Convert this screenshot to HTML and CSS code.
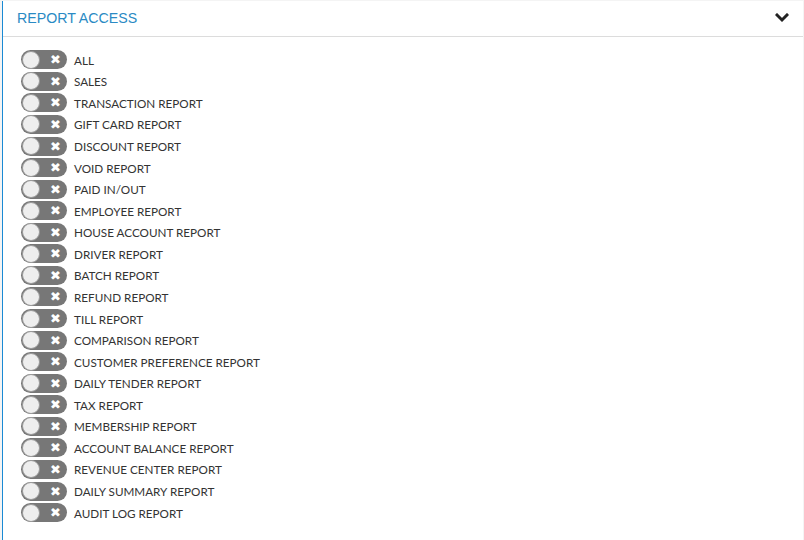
FILE: index.html
```html
<!DOCTYPE html>
<html lang="en">
<head>
  <meta charset="UTF-8" />
  <title>Report Access</title>
  <link rel="stylesheet" href="styles.css">
</head>
<body>
  <div class="panel">
    <div class="panel-head">
      <span class="panel-title">REPORT ACCESS</span>
      <svg class="chevron" width="14" height="10" viewBox="0 0 14 10">
        <path d="M2 2 L7 7 L12 2" fill="none" stroke="#222" stroke-width="3" stroke-linecap="square"/>
      </svg>
    </div>
    <div class="panel-body">
      <div class="row"><span class="toggle"><span class="knob"></span><span class="cross">&#10006;</span></span>ALL</div>
      <div class="row"><span class="toggle"><span class="knob"></span><span class="cross">&#10006;</span></span>SALES</div>
      <div class="row"><span class="toggle"><span class="knob"></span><span class="cross">&#10006;</span></span>TRANSACTION REPORT</div>
      <div class="row"><span class="toggle"><span class="knob"></span><span class="cross">&#10006;</span></span>GIFT CARD REPORT</div>
      <div class="row"><span class="toggle"><span class="knob"></span><span class="cross">&#10006;</span></span>DISCOUNT REPORT</div>
      <div class="row"><span class="toggle"><span class="knob"></span><span class="cross">&#10006;</span></span>VOID REPORT</div>
      <div class="row"><span class="toggle"><span class="knob"></span><span class="cross">&#10006;</span></span>PAID IN/OUT</div>
      <div class="row"><span class="toggle"><span class="knob"></span><span class="cross">&#10006;</span></span>EMPLOYEE REPORT</div>
      <div class="row"><span class="toggle"><span class="knob"></span><span class="cross">&#10006;</span></span>HOUSE ACCOUNT REPORT</div>
      <div class="row"><span class="toggle"><span class="knob"></span><span class="cross">&#10006;</span></span>DRIVER REPORT</div>
      <div class="row"><span class="toggle"><span class="knob"></span><span class="cross">&#10006;</span></span>BATCH REPORT</div>
      <div class="row"><span class="toggle"><span class="knob"></span><span class="cross">&#10006;</span></span>REFUND REPORT</div>
      <div class="row"><span class="toggle"><span class="knob"></span><span class="cross">&#10006;</span></span>TILL REPORT</div>
      <div class="row"><span class="toggle"><span class="knob"></span><span class="cross">&#10006;</span></span>COMPARISON REPORT</div>
      <div class="row"><span class="toggle"><span class="knob"></span><span class="cross">&#10006;</span></span>CUSTOMER PREFERENCE REPORT</div>
      <div class="row"><span class="toggle"><span class="knob"></span><span class="cross">&#10006;</span></span>DAILY TENDER REPORT</div>
      <div class="row"><span class="toggle"><span class="knob"></span><span class="cross">&#10006;</span></span>TAX REPORT</div>
      <div class="row"><span class="toggle"><span class="knob"></span><span class="cross">&#10006;</span></span>MEMBERSHIP REPORT</div>
      <div class="row"><span class="toggle"><span class="knob"></span><span class="cross">&#10006;</span></span>ACCOUNT BALANCE REPORT</div>
      <div class="row"><span class="toggle"><span class="knob"></span><span class="cross">&#10006;</span></span>REVENUE CENTER REPORT</div>
      <div class="row"><span class="toggle"><span class="knob"></span><span class="cross">&#10006;</span></span>DAILY SUMMARY REPORT</div>
      <div class="row"><span class="toggle"><span class="knob"></span><span class="cross">&#10006;</span></span>AUDIT LOG REPORT</div>
    </div>
  </div>
</body>
</html>
```

FILE: styles.css
```css
* {
  margin: 0;
  padding: 0;
  box-sizing: border-box;
}

body {
  background: #f4f4f4;
  font-family: Lato, "Open Sans", sans-serif;
  color: #333;
  padding-top: 1px;
  height: 540px;
  overflow: hidden;
}

.panel {
  background: #fff;
  border-left: 1px solid #1a8ad4;
  margin-left: 2px;
  margin-right: 1px;
  height: 539px;
}

/* Header */
.panel-head {
  height: 36px;
  border-bottom: 1px solid #dcdcdc;
  display: flex;
  align-items: center;
  justify-content: space-between;
  padding: 0 14px 1px 14px;
}

.panel-title {
  font-family: "Liberation Sans", Arial, sans-serif;
  color: #2a8ac4;
  font-size: 14.2px;
}

.chevron {
  display: block;
}

/* Toggle rows */
.panel-body {
  padding: 12px 0 0 18px;
}

.row {
  height: 21.57px;
  display: flex;
  align-items: center;
  font-size: 11.7px;
  color: #333;
}

.toggle {
  position: relative;
  width: 46px;
  height: 19px;
  border-radius: 10px;
  background: #777;
  margin-right: 7px;
  flex-shrink: 0;
}

.knob {
  position: absolute;
  left: 1px;
  top: 0.5px;
  width: 18px;
  height: 18px;
  border-radius: 50%;
  background: #eee;
  border: 1px solid #999;
}

.cross {
  position: absolute;
  left: 29px;
  top: 2px;
  font-size: 13px;
  line-height: 15px;
  color: #fff;
}
```
